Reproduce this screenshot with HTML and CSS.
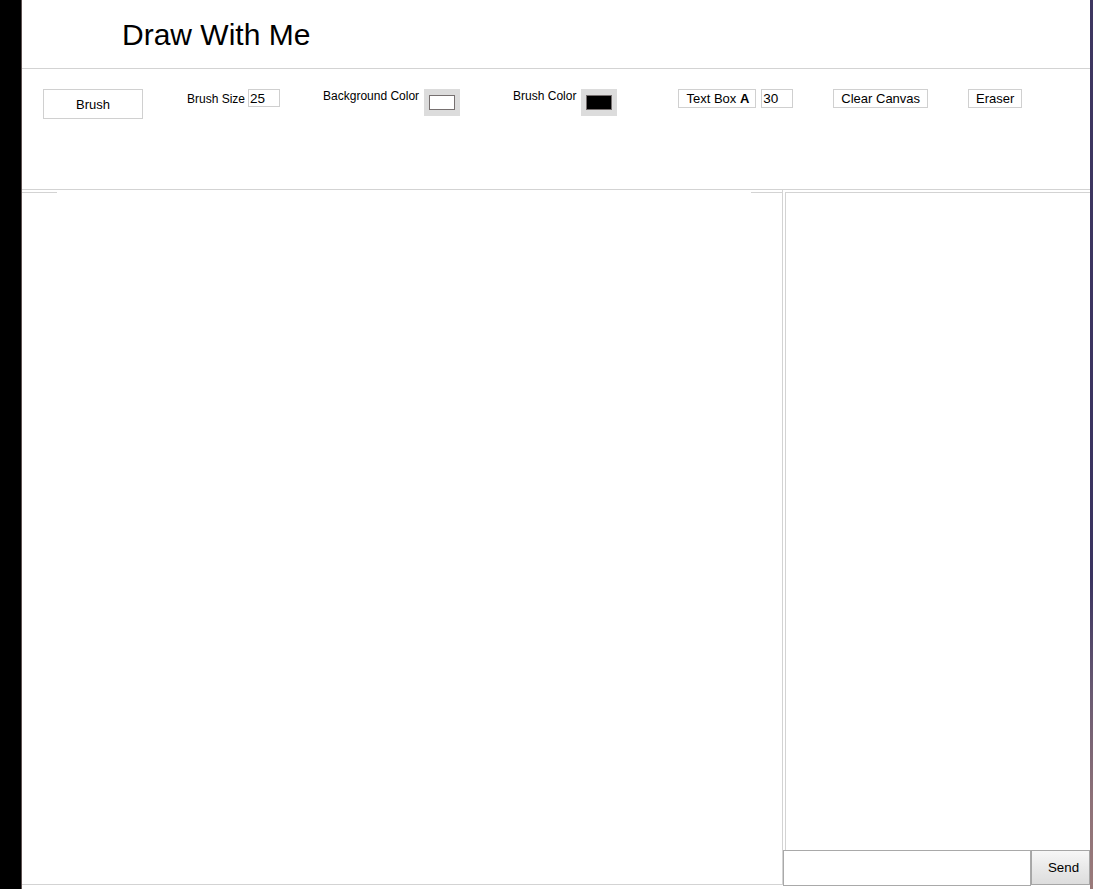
FILE: index.html
```html
<!DOCTYPE html>
<html>
<head>
<meta charset="utf-8">
<title>Draw With Me</title>
<link rel="stylesheet" href="styles.css">
</head>
<body>
<div class="edge-left"></div>
<div class="app">
  <header class="header">
    <h1 class="title">Draw With Me</h1>
  </header>
  <div class="toolbar">
    <button class="btn btn-brush">Brush</button>
    <div class="group g-size">
      <span class="label label-low">Brush Size</span>
      <input class="num num-size" type="text" value="25">
    </div>
    <div class="group g-bg">
      <span class="label">Background Color</span>
      <span class="swatch"><span class="swatch-in swatch-white"></span></span>
    </div>
    <div class="group g-bc">
      <span class="label">Brush Color</span>
      <span class="swatch"><span class="swatch-in swatch-black"></span></span>
    </div>
    <div class="group g-text">
      <button class="btn btn-text">Text Box <b>A</b></button>
      <input class="num num-text" type="text" value="30">
    </div>
    <button class="btn g-clear">Clear Canvas</button>
    <button class="btn g-eraser">Eraser</button>
  </div>
  <div class="main">
    <div class="canvas-col">
      <div class="canvas-top"><span class="seg seg-left"></span><span class="seg seg-right"></span></div>
    </div>
    <div class="chat-col">
      <div class="chat-log"></div>
      <div class="chat-form">
        <input class="chat-input" type="text">
        <button class="send">Send</button>
      </div>
    </div>
  </div>
</div>
<div class="edge-right"></div>
</body>
</html>
```
FILE: styles.css
```css
html, body {
  margin: 0;
  padding: 0;
}
body {
  display: flex;
  height: 889px;
  overflow: hidden;
  background: #000;
  font-family: "Liberation Sans", Arial, sans-serif;
  color: #000;
}
.edge-left {
  width: 21px;
  background: #000;
  border-right: 1px solid #5e5252;
  flex: none;
}
.edge-right {
  width: 3px;
  flex: none;
  background: linear-gradient(#3e3660 0%, #3a3360 65%, #6a5a72 78%, #8e7178 90%, #9a7a7a 100%);
}
.app {
  width: 1068px;
  flex: none;
  background: #fff;
  display: flex;
  flex-direction: column;
}
.header {
  height: 69px;
  box-sizing: border-box;
  border-bottom: 1px solid #d3d3d3;
  padding-left: 100px;
}
.title {
  margin: 0;
  padding-top: 18px;
  font-size: 30px;
  font-weight: normal;
  line-height: 34px;
}
.toolbar {
  height: 121px;
  box-sizing: border-box;
  border-bottom: 1px solid #d3d3d3;
  padding: 20px 0 0 21px;
  display: flex;
  align-items: flex-start;
}
.btn {
  height: 19px;
  box-sizing: border-box;
  border: 1px solid #d0d0d0;
  background: #fff;
  color: #000;
  font-family: "Liberation Sans", Arial, sans-serif;
  font-size: 13px;
  line-height: 17px;
  padding: 0 6px;
  margin: 0;
}
.btn b {
  font-weight: bold;
}
.btn-brush {
  width: 100px;
  height: 30px;
  line-height: 29px;
}
.btn-text {
  padding: 0 6px 0 7px;
}
.group {
  display: flex;
  align-items: flex-start;
}
.label {
  font-size: 12px;
  line-height: 14px;
  margin-top: 0;
}
.label-low {
  margin-top: 3px;
}
.num {
  height: 18px;
  width: 32px;
  box-sizing: border-box;
  border: 1px solid #cfcfcf;
  padding: 0 1px;
  margin: 0;
  font-family: "Liberation Sans", Arial, sans-serif;
  font-size: 13.5px;
  line-height: 16px;
  color: #000;
  outline: none;
}
.num-size {
  margin-left: 3px;
}
.num-text {
  margin-left: 5px;
  height: 19px;
}
.swatch {
  margin-left: 5px;
  width: 36px;
  height: 27px;
  box-sizing: border-box;
  padding: 6px 5px;
  background: #dcdcdc;
  display: flex;
}
.swatch-in {
  flex: 1;
  border: 1px solid #767070;
}
.swatch-white {
  background: #fff;
}
.swatch-black {
  background: #000;
}
.g-size {
  margin-left: 44px;
}
.g-bg {
  margin-left: 43px;
}
.g-bc {
  margin-left: 53px;
}
.g-text {
  margin-left: 61px;
}
.g-clear {
  margin-left: 40px;
  padding: 0 7px;
}
.g-eraser {
  margin-left: 40px;
  padding: 0 7px;
}
.main {
  display: flex;
  flex: 1;
}
.canvas-col {
  width: 761px;
  height: 695px;
  box-sizing: border-box;
  border-right: 1px solid #d3d3d3;
  border-bottom: 1px solid #d3d3d3;
}
.canvas-top {
  display: flex;
  justify-content: space-between;
  margin-top: 2px;
}
.seg {
  height: 1px;
  background: #d3d3d3;
}
.seg-left {
  width: 35px;
}
.seg-right {
  width: 31px;
}
.chat-col {
  flex: 1;
  height: 696px;
  display: flex;
  flex-direction: column;
}
.chat-log {
  flex: 1;
  margin: 2px 0 0 2px;
  border-top: 1px solid #d3d3d3;
  border-left: 1px solid #d3d3d3;
}
.chat-form {
  display: flex;
  height: 36px;
  align-items: flex-start;
}
.chat-input {
  width: 248px;
  height: 36px;
  box-sizing: border-box;
  border: 1px solid #a9a9a9;
  margin: 0;
  padding: 0 4px;
  outline: none;
}
.send {
  width: 59px;
  height: 35px;
  box-sizing: border-box;
  margin: 0;
  border: 1px solid #a6a6a6;
  background: linear-gradient(#f7f7f7, #e9e9e9 50%, #dddddd);
  font-family: "Liberation Sans", Arial, sans-serif;
  font-size: 13.33px;
  line-height: 31px;
  color: #000;
  padding: 0 0 0 6px;
}
```
